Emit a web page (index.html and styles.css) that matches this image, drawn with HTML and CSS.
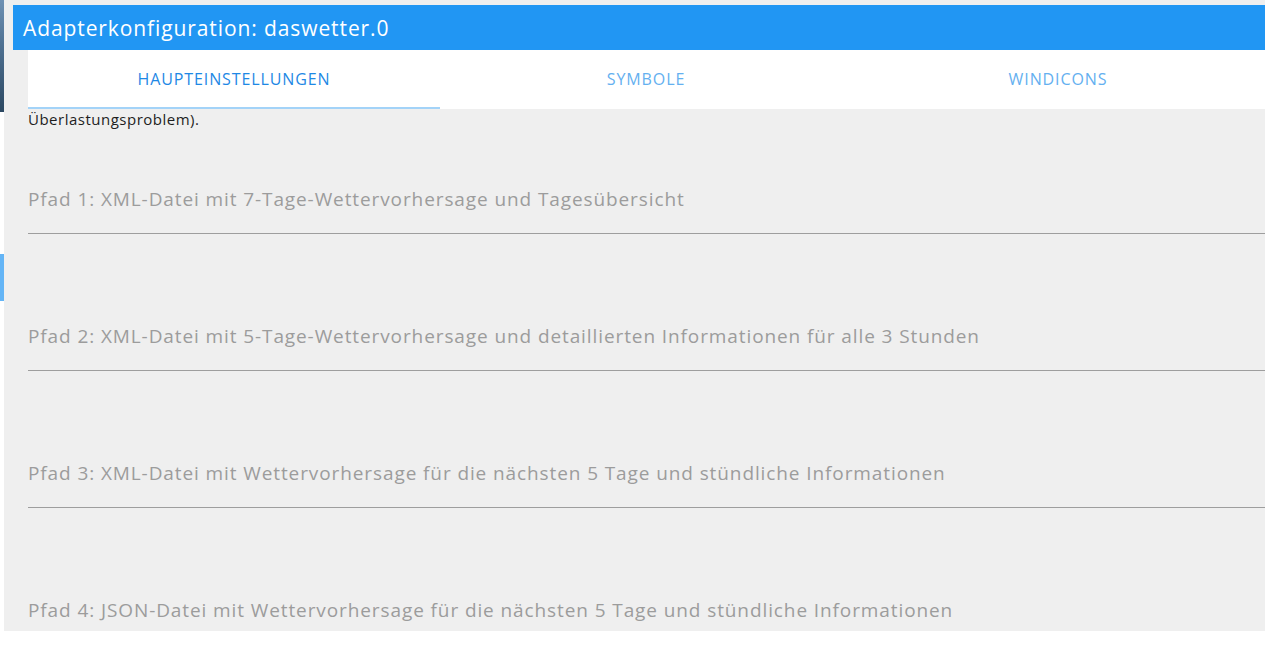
FILE: index.html
```html
<!DOCTYPE html>
<html lang="de">
<head>
<meta charset="utf-8">
<title>Adapterkonfiguration: daswetter.0</title>
<link rel="stylesheet" href="styles.css">
</head>
<body>
<div class="page">
  <aside class="side">
    <div class="side-img"></div>
    <div class="side-mark"></div>
  </aside>
  <main class="panel">
    <header class="titlebar">Adapterkonfiguration: daswetter.0</header>
    <div class="dialog">
      <nav class="tabs">
        <div class="tab active">HAUPTEINSTELLUNGEN</div>
        <div class="tab">SYMBOLE</div>
        <div class="tab">WINDICONS</div>
      </nav>
      <div class="content">
        <p class="intro">Überlastungsproblem).</p>
        <div class="fields">
          <div class="field">
            <label class="label">Pfad 1: XML-Datei mit 7-Tage-Wettervorhersage und Tagesübersicht</label>
            <div class="input"></div>
          </div>
          <div class="field">
            <label class="label">Pfad 2: XML-Datei mit 5-Tage-Wettervorhersage und detaillierten Informationen für alle 3 Stunden</label>
            <div class="input"></div>
          </div>
          <div class="field">
            <label class="label">Pfad 3: XML-Datei mit Wettervorhersage für die nächsten 5 Tage und stündliche Informationen</label>
            <div class="input"></div>
          </div>
          <div class="field">
            <label class="label">Pfad 4: JSON-Datei mit Wettervorhersage für die nächsten 5 Tage und stündliche Informationen</label>
            <div class="input"></div>
          </div>
        </div>
      </div>
    </div>
  </main>
</div>
</body>
</html>
```

FILE: styles.css
```css
* { box-sizing: border-box; }
html, body {
  margin: 0;
  padding: 0;
  background: #ffffff;
  font-family: "Open Sans", "Noto Sans", sans-serif;
}
.page {
  display: flex;
  width: 1265px;
  height: 648px;
  overflow: hidden;
}
.side {
  width: 4px;
  flex: none;
  display: flex;
  flex-direction: column;
}
.side-img {
  height: 112px;
  background: linear-gradient(180deg, #6f91b3 0%, #4f7192 40%, #2c4862 100%);
}
.side-mark {
  margin-top: 142px;
  height: 47px;
  background: #64b5f6;
}
.panel {
  flex: 1;
  height: 631px;
  background: #efefef;
  padding-top: 5px;
  overflow: hidden;
}
.titlebar {
  margin-left: 9px;
  height: 45px;
  background: #2196f3;
  color: #ffffff;
  font-size: 21px;
  letter-spacing: 0.9px;
  line-height: 46px;
  padding-left: 10px;
  white-space: nowrap;
}
.dialog {
  margin-left: 24px;
}
.tabs {
  display: flex;
  background: #ffffff;
  height: 59px;
  width: 1237px;
}
.tab {
  width: 412px;
  flex: none;
  display: flex;
  align-items: center;
  justify-content: center;
  font-size: 16px;
  letter-spacing: 0.9px;
  color: #64b0f0;
  padding-top: 1px;
  border-bottom: 2px solid transparent;
}
.tab.active {
  color: #1e88e5;
  border-bottom-color: #a3d3f8;
}
.content {
  padding-top: 1px;
}
.intro {
  margin: 0;
  font-size: 15px;
  letter-spacing: 0.5px;
  line-height: 19px;
  color: #1e1e1e;
}
.fields {
  display: flex;
  flex-direction: column;
  gap: 90px;
  margin-top: 58px;
}
.label {
  display: block;
  height: 24px;
  font-size: 19px;
  letter-spacing: 0.9px;
  line-height: 24px;
  color: #9c9c9c;
  white-space: nowrap;
}
.input {
  height: 23px;
  border-bottom: 1px solid #9e9e9e;
}
```
